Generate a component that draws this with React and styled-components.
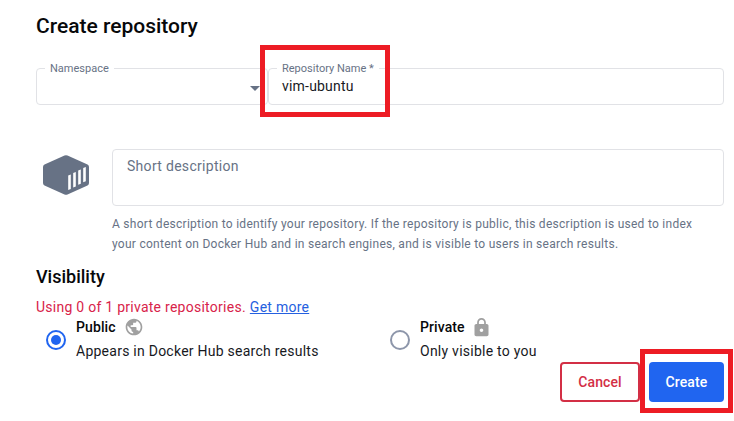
import React from 'react';
import styled, { createGlobalStyle } from 'styled-components';

const GlobalStyle = createGlobalStyle`
  html, body {
    margin: 0;
    padding: 0;
    background: #fff;
  }
`;

const Page = styled.div`
  position: relative;
  width: 734px;
  height: 421px;
  overflow: hidden;
  box-sizing: border-box;
  padding: 14px 10px 0 36px;
  font-family: Roboto, "Liberation Sans", sans-serif;
  color: #17191e;
`;

const Title = styled.h1`
  margin: 0;
  font-size: 21px;
  line-height: 24px;
  font-weight: 500;
  color: #07080a;
`;

const NameRow = styled.div`
  display: flex;
  margin-top: 30px;
`;

const Field = styled.div`
  position: relative;
  box-sizing: border-box;
  height: 37px;
  border: 1px solid #e1e2e6;
  border-radius: 4px;
  flex: ${p => (p.$grow ? '1' : '0 0 232px')};
  padding: 0 13px;
  font-size: 14px;
  line-height: 35px;
  letter-spacing: 0.2px;
`;

const FloatLabel = styled.span`
  position: absolute;
  top: -7px;
  left: 8px;
  padding: 0 5px;
  background: #fff;
  font-size: 11px;
  line-height: 13px;
  letter-spacing: 0;
  color: #677285;
`;

const Caret = styled.span`
  position: absolute;
  top: 17px;
  right: 7px;
  width: 0;
  height: 0;
  border-left: 5px solid transparent;
  border-right: 5px solid transparent;
  border-top: 5px solid #677285;
`;

const DescRow = styled.div`
  display: flex;
  margin-top: 44px;
`;

const IconCol = styled.div`
  flex: 0 0 76px;
  padding: 6px 0 0 7px;
  box-sizing: border-box;
`;

const DescCol = styled.div`
  flex: 1;
`;

const DescBox = styled.div`
  box-sizing: border-box;
  height: 57px;
  border: 1px solid #e1e2e6;
  border-radius: 4px;
  padding: 8px 14px;
  font-size: 14px;
  line-height: 17px;
  letter-spacing: 0.3px;
  color: #677285;
`;

const Help = styled.p`
  margin: 8px 0 0;
  font-size: 12px;
  line-height: 20px;
  letter-spacing: 0.27px;
  color: #677285;
`;

const SectionTitle = styled.h2`
  margin: 12px 0 0;
  font-size: 18px;
  line-height: 22px;
  font-weight: 500;
  color: #07080a;
`;

const Quota = styled.div`
  margin-top: 11px;
  font-size: 14px;
  line-height: 17px;
  letter-spacing: 0.26px;
  color: #d8234a;
`;

const QuotaLink = styled.a`
  margin-left: 4px;
  color: #2560e0;
  text-decoration: underline;
`;

const RadioRow = styled.div`
  display: flex;
  margin-top: 1px;
`;

const RadioOption = styled.div`
  display: flex;
  align-items: center;
  flex: 0 0 ${p => p.$width}px;
  padding-left: ${p => p.$inset}px;
  box-sizing: border-box;
`;

const RadioDot = styled.span`
  flex: none;
  box-sizing: border-box;
  width: 20px;
  height: 20px;
  margin: 2px 10px 0 0;
  border-radius: 50%;
  border: 2px solid ${p => (p.$on ? '#2065f0' : '#8d96aa')};
  display: flex;
  align-items: center;
  justify-content: center;
  &::after {
    content: '';
    display: ${p => (p.$on ? 'block' : 'none')};
    width: 10px;
    height: 10px;
    border-radius: 50%;
    background: #2065f0;
  }
`;

const OptionName = styled.div`
  display: flex;
  align-items: center;
  gap: ${p => p.$gap}px;
  height: 20px;
  font-size: 14px;
  font-weight: 500;
  letter-spacing: 0.1px;
  color: #07080a;
`;

const OptionHint = styled.div`
  margin-top: 4px;
  font-size: 14px;
  line-height: 20px;
  letter-spacing: 0.25px;
  color: #17191e;
`;

const Actions = styled.div`
  display: flex;
  justify-content: flex-end;
  gap: 9px;
  margin-top: 1px;
`;

const Button = styled.button`
  box-sizing: border-box;
  height: 40px;
  width: ${p => p.$width}px;
  padding: 0;
  border-radius: 4px;
  border: ${p => (p.$primary ? '0' : '2px solid #d32f45')};
  background: ${p => (p.$primary ? '#2065f0' : '#fff')};
  color: ${p => (p.$primary ? '#fff' : '#d32f45')};
  font-family: inherit;
  font-size: 14px;
  font-weight: 500;
  letter-spacing: 0.1px;
`;

const Highlight = styled.div`
  position: absolute;
  box-sizing: border-box;
  border: 5px solid #ed1c24;
  left: ${p => p.$left}px;
  top: ${p => p.$top}px;
  width: ${p => p.$width}px;
  height: ${p => p.$height}px;
`;

const RepoIcon = () => (
  <svg width="46" height="40" viewBox="0 0 46 40">
    <path
      fill="#677285"
      d="M21.5 0.5 Q23 0 24.5 0.5 L44.5 9.5 Q46 10.2 46 12 L46 28 Q46 29.8 44.5 30.5 L24.5 39.5 Q23 40 21.5 39.5 L1.5 30.5 Q0 29.8 0 28 L0 12 Q0 10.2 1.5 9.5 Z"
    />
    <path fill="#fff" d="M25.2 20.4 L27.8 19.4 L27.8 34 L25.2 35 Z" />
    <path fill="#fff" d="M30.2 18 L32.8 17 L32.8 31.4 L30.2 32.4 Z" />
    <path fill="#fff" d="M35.2 15.4 L37.8 14.4 L37.8 28.8 L35.2 29.8 Z" />
    <path fill="#fff" d="M40.2 13 L42.8 12 L42.8 26.2 L40.2 27.2 Z" />
  </svg>
);

const GlobeIcon = () => (
  <svg width="20" height="20" viewBox="0 0 24 24">
    <path
      fill="#a0a0a0"
      d="M12 2C6.48 2 2 6.48 2 12s4.48 10 10 10 10-4.48 10-10S17.52 2 12 2zm-1 17.93c-3.95-.49-7-3.85-7-7.93 0-.62.08-1.21.21-1.79L9 15v1c0 1.1.9 2 2 2v1.93zm6.9-2.54c-.26-.81-1-1.39-1.9-1.39h-1v-3c0-.55-.45-1-1-1H8v-2h2c.55 0 1-.45 1-1V7h2c1.1 0 2-.9 2-2v-.41c2.93 1.19 5 4.06 5 7.41 0 2.08-.8 3.97-2.1 5.39z"
    />
  </svg>
);

const LockIcon = () => (
  <svg width="21" height="21" viewBox="0 0 24 24">
    <path
      fill="#a0a0a0"
      d="M18 8h-1V6c0-2.76-2.24-5-5-5S7 3.24 7 6v2H6c-1.1 0-2 .9-2 2v10c0 1.1.9 2 2 2h12c1.1 0 2-.9 2-2V10c0-1.1-.9-2-2-2zm-6 9c-1.1 0-2-.9-2-2s.9-2 2-2 2 .9 2 2-.9 2-2 2zM9 8V6c0-1.66 1.34-3 3-3s3 1.34 3 3v2H9z"
    />
  </svg>
);

export default function App() {
  return (
    <Page>
      <GlobalStyle />
      <Title>Create repository</Title>
      <NameRow>
        <Field>
          <FloatLabel>Namespace</FloatLabel>
          <Caret />
        </Field>
        <Field $grow>
          <FloatLabel>Repository Name *</FloatLabel>
          vim-ubuntu
        </Field>
      </NameRow>
      <DescRow>
        <IconCol><RepoIcon /></IconCol>
        <DescCol>
          <DescBox>Short description</DescBox>
          <Help>
            A short description to identify your repository. If the repository is public, this description is used to index
            <br />
            your content on Docker Hub and in search engines, and is visible to users in search results.
          </Help>
        </DescCol>
      </DescRow>
      <SectionTitle>Visibility</SectionTitle>
      <Quota>
        Using 0 of 1 private repositories.
        <QuotaLink>Get more</QuotaLink>
      </Quota>
      <RadioRow>
        <RadioOption $width={344} $inset={10}>
          <RadioDot $on />
          <div>
            <OptionName $gap={8}>Public <GlobeIcon /></OptionName>
            <OptionHint>Appears in Docker Hub search results</OptionHint>
          </div>
        </RadioOption>
        <RadioOption $width={300} $inset={10}>
          <RadioDot />
          <div>
            <OptionName $gap={6}>Private <LockIcon /></OptionName>
            <OptionHint>Only visible to you</OptionHint>
          </div>
        </RadioOption>
      </RadioRow>
      <Actions>
        <Button $width={80}>Cancel</Button>
        <Button $primary $width={75}>Create</Button>
      </Actions>
      <Highlight $left={260} $top={45} $width={130} $height={72} />
      <Highlight $left={640} $top={349} $width={93} $height={64} />
    </Page>
  );
}
